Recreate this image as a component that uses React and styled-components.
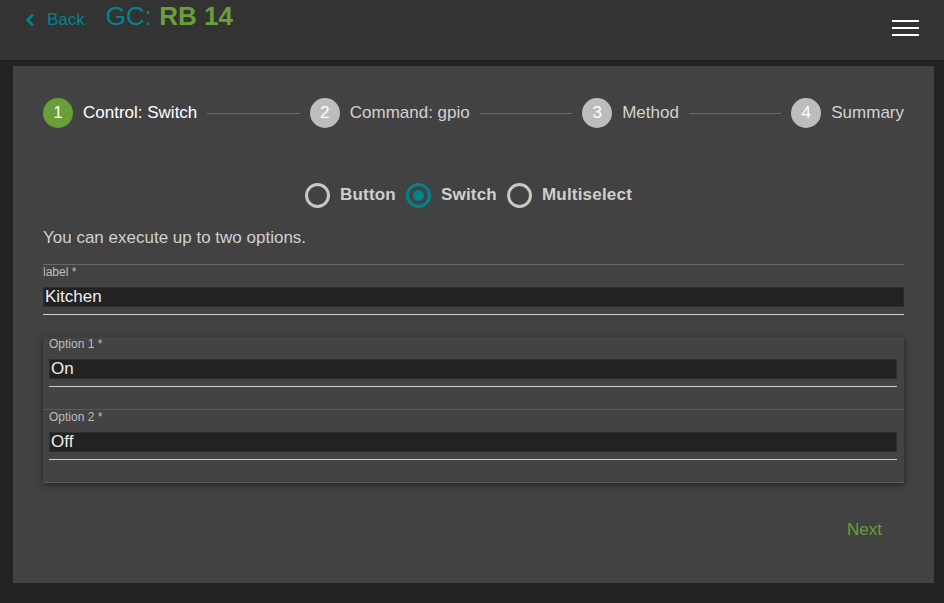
import React from "react";
import styled, { createGlobalStyle } from "styled-components";

const GlobalStyle = createGlobalStyle`
  html, body { margin: 0; padding: 0; }
  body {
    background: #232323;
    font-family: "Liberation Sans", Arial, sans-serif;
    width: 944px;
    height: 603px;
    overflow: hidden;
  }
  * { box-sizing: border-box; }
`;

const Page = styled.div`
  display: flex;
  flex-direction: column;
  width: 944px;
  height: 603px;
`;

const Header = styled.header`
  height: 61px;
  background: #333333;
  border-bottom: 1px solid #1b1b1b;
  display: flex;
  align-items: flex-start;
  padding: 0 25px 0 25px;
`;

const BackLink = styled.a`
  display: flex;
  align-items: center;
  gap: 12px;
  color: #00838f;
  font-size: 17px;
  margin-top: 10px;
  height: 19px;
  cursor: pointer;
`;

const Title = styled.h1`
  margin: 1px 0 0 21px;
  font-size: 26px;
  font-weight: normal;
  color: #00838f;
  line-height: 30px;
  span { color: #689f38; font-weight: bold; }
`;

const Spacer = styled.div`
  flex: 1;
`;

const Burger = styled.button`
  margin-top: 20px;
  width: 27px;
  height: 16px;
  padding: 0;
  border: 0;
  background: transparent;
  display: flex;
  flex-direction: column;
  justify-content: space-between;
  i {
    display: block;
    height: 2px;
    background: #ffffff;
  }
`;

const Main = styled.main`
  padding: 5px 10px 20px 13px;
  flex: 1;
  display: flex;
`;

const Panel = styled.section`
  flex: 1;
  background: #424242;
  padding: 32px 30px 0 30px;
  display: flex;
  flex-direction: column;
`;

const Stepper = styled.div`
  display: flex;
  align-items: center;
  height: 30px;
`;

const Step = styled.div`
  display: flex;
  align-items: center;
  gap: 10px;
  font-size: 17px;
  color: ${(p) => (p.$active ? "#ffffff" : "#d2d2d2")};
  white-space: nowrap;
`;

const StepDot = styled.span`
  width: 30px;
  height: 30px;
  border-radius: 50%;
  background: ${(p) => (p.$active ? "#689f38" : "#bdbdbd")};
  color: #ffffff;
  font-size: 17px;
  display: flex;
  align-items: center;
  justify-content: center;
`;

const Connector = styled.div`
  flex: 1;
  height: 1px;
  background: #6a6a6a;
  margin: 0 10px;
`;

const RadioRow = styled.div`
  display: flex;
  justify-content: center;
  margin-top: 55px;
`;

const RadioItem = styled.label`
  display: flex;
  align-items: center;
  gap: 10px;
  margin-right: 10px;
  font-size: 17px;
  font-weight: bold;
  color: #cfcfcf;
  height: 24px;
  letter-spacing: 0.2px;
`;

const RadioCircle = styled.span`
  width: 25px;
  height: 25px;
  border-radius: 50%;
  border: 3px solid ${(p) => (p.$checked ? "#00838f" : "#c8c8c8")};
  display: flex;
  align-items: center;
  justify-content: center;
  &::after {
    content: "";
    width: 11px;
    height: 11px;
    border-radius: 50%;
    background: ${(p) => (p.$checked ? "#00838f" : "transparent")};
  }
`;

const Hint = styled.p`
  margin: 21px 0 0 0;
  font-size: 17px;
  color: #d0d0d0;
  line-height: 20px;
`;

const Field = styled.div`
  display: flex;
  flex-direction: column;
  border-top: ${(p) => (p.$topLine ? `1px solid ${p.$topLine}` : "none")};
`;

const FieldLabel = styled.label`
  font-size: 12px;
  line-height: 14px;
  color: #bdbdbd;
`;

const Input = styled.div`
  margin-top: 8px;
  height: 20px;
  background: #222222;
  border: 1px solid #2e2e2e;
  color: #eeeeee;
  font-size: 17px;
  line-height: 18px;
  padding-left: 1px;
`;

const Underline = styled.div`
  margin-top: 7px;
  height: 1px;
  background: #d0d0d0;
`;

const LabelField = styled(Field)`
  margin-top: 16px;
`;

const Card = styled.div`
  margin-top: 22px;
  background: #434343;
  box-shadow: 0 2px 6px rgba(0, 0, 0, 0.45);
  border-bottom: 1px solid #5a5a5a;
  display: flex;
  flex-direction: column;
`;

const OptionRow = styled.div`
  padding: 0 7px 22px 6px;
  border-top: ${(p) => (p.$first ? "none" : "1px solid #5a5a5a")};
  display: flex;
  flex-direction: column;
`;

const Actions = styled.div`
  display: flex;
  justify-content: flex-end;
  margin-top: 29px;
`;

const NextButton = styled.button`
  background: transparent;
  border: 0;
  color: #689f38;
  font-family: "Liberation Sans", Arial, sans-serif;
  font-size: 17px;
  height: 36px;
  padding: 0 22px;
`;

const steps = [
  { n: 1, label: "Control: Switch", active: true },
  { n: 2, label: "Command: gpio" },
  { n: 3, label: "Method" },
  { n: 4, label: "Summary" },
];

const radios = [
  { label: "Button" },
  { label: "Switch", checked: true },
  { label: "Multiselect" },
];

export default function App() {
  return (
    <Page>
      <GlobalStyle />
      <Header>
        <BackLink>
          <svg width="10" height="14" viewBox="0 0 10 14" fill="none">
            <polyline points="8,1.5 2.5,7 8,12.5" stroke="#00838f" strokeWidth="2.6" />
          </svg>
          Back
        </BackLink>
        <Title>
          GC: <span>RB 14</span>
        </Title>
        <Spacer />
        <Burger aria-label="menu">
          <i />
          <i />
          <i />
        </Burger>
      </Header>
      <Main>
        <Panel>
          <Stepper>
            {steps.map((s, i) => (
              <React.Fragment key={s.n}>
                {i > 0 && <Connector />}
                <Step $active={s.active}>
                  <StepDot $active={s.active}>{s.n}</StepDot>
                  {s.label}
                </Step>
              </React.Fragment>
            ))}
          </Stepper>
          <RadioRow>
            {radios.map((r) => (
              <RadioItem key={r.label}>
                <RadioCircle $checked={r.checked} />
                {r.label}
              </RadioItem>
            ))}
          </RadioRow>
          <Hint>You can execute up to two options.</Hint>
          <LabelField $topLine="#666666">
            <FieldLabel>label *</FieldLabel>
            <Input>Kitchen</Input>
            <Underline />
          </LabelField>
          <Card>
            <OptionRow $first>
              <FieldLabel>Option 1 *</FieldLabel>
              <Input>On</Input>
              <Underline />
            </OptionRow>
            <OptionRow>
              <FieldLabel>Option 2 *</FieldLabel>
              <Input>Off</Input>
              <Underline />
            </OptionRow>
          </Card>
          <Actions>
            <NextButton>Next</NextButton>
          </Actions>
        </Panel>
      </Main>
    </Page>
  );
}
